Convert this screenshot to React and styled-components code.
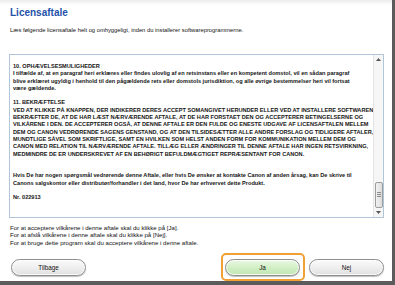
import React from "react";
import styled, { createGlobalStyle } from "styled-components";

const Global = createGlobalStyle`
  html, body { margin: 0; padding: 0; background: #ffffff; }
  body { font-family: "Liberation Sans", Arial, sans-serif; }
  * { box-sizing: border-box; }
`;

const Window = styled.div`
  width: 395px;
  height: 285px;
  display: flex;
  flex-direction: column;
  background: linear-gradient(#ececec 0px, #ffffff 5px);
  border-right: 3px solid #5b5b5b;
  border-bottom: 4px solid #5b5b5b;
  padding: 7px 8px 0 9px;
  font-family: "Liberation Sans", Arial, sans-serif;
  color: #111;
`;

const Title = styled.h1`
  margin: 0 0 0 1px;
  font-size: 10px;
  line-height: 12px;
  font-weight: bold;
  color: #2452a8;
`;

const Subtitle = styled.p`
  margin: 8px 0 0 1px;
  font-size: 5.8px;
  line-height: 7px;
  color: #111;
`;

const TextBox = styled.div`
  margin-top: 20px;
  height: 164px;
  border: 1px solid #b3c5d8;
  display: flex;
  overflow: hidden;
`;

const Content = styled.div`
  flex: 1;
  padding: 8px 0 0 3px;
  font-size: 5.6px;
  line-height: 7.3px;
  font-weight: bold;
  color: #151515;
  white-space: nowrap;
`;

const Para = styled.div`
  margin-bottom: ${(p) => p.$gap || 7.3}px;
`;

const Line = styled.div``;

const Scrollbar = styled.div`
  width: 10px;
  background: #f6f6f6;
  border-left: 1px solid #e4e4e4;
  display: flex;
  flex-direction: column;
  align-items: center;
`;

const Arrow = styled.div`
  width: 9px;
  height: 9px;
  display: flex;
  align-items: center;
  justify-content: center;
`;

const Track = styled.div`
  flex: 1;
  width: 100%;
  display: flex;
  flex-direction: column;
  justify-content: flex-end;
  align-items: center;
`;

const Thumb = styled.div`
  width: 8px;
  height: 26px;
  border: 1px solid #9c9c9c;
  border-radius: 2px;
  background: linear-gradient(90deg, #f2f2f2, #dcdcdc);
  display: flex;
  flex-direction: column;
  align-items: center;
  justify-content: center;
  gap: 1px;
  margin-bottom: 0px;
`;

const Grip = styled.div`
  width: 4px;
  height: 1px;
  background: #8a8a8a;
`;

const Instructions = styled.div`
  margin: 6px 0 0 1px;
  font-size: 6.1px;
  line-height: 7.5px;
  color: #111;
`;

const ButtonBar = styled.div`
  margin-top: 7px;
  display: flex;
  align-items: center;
  justify-content: space-between;
  padding: 0 0 0 2px;
`;

const RightGroup = styled.div`
  display: flex;
  align-items: center;
  gap: 4px;
`;

const FocusRing = styled.div`
  border: 2px solid #f0a035;
  border-radius: 5px;
  padding: 1px 3px 3px 2px;
`;

const Button = styled.button`
  width: 75px;
  height: 17px;
  border-radius: 9px;
  border: 1px solid #8e8e8e;
  background: ${(p) =>
    p.$primary
      ? "linear-gradient(#eaf8e4, #cdeec0 60%, #c4e6b6)"
      : "linear-gradient(#fbfbfb, #ececec 60%, #e0e0e0)"};
  box-shadow: inset 0 0 0 1px rgba(255, 255, 255, 0.8), 0 1px 1px rgba(0, 0, 0, 0.25);
  font-family: "Liberation Sans", Arial, sans-serif;
  font-size: 6.3px;
  color: #111;
  padding: 0;
`;

const UpIcon = () => (
  <svg width="5" height="3" viewBox="0 0 5 3">
    <path d="M0 3 L2.5 0 L5 3 Z" fill="#555" />
  </svg>
);
const DownIcon = () => (
  <svg width="5" height="3" viewBox="0 0 5 3">
    <path d="M0 0 L2.5 3 L5 0 Z" fill="#555" />
  </svg>
);

export default function App() {
  return (
    <>
      <Global />
      <Window>
        <Title>Licensaftale</Title>
        <Subtitle>
          Læs følgende licensaftale helt og omhyggeligt, inden du installerer softwareprogrammerne.
        </Subtitle>
        <TextBox>
          <Content>
            <Para>
              <Line>10. OPHÆVELSESMULIGHEDER</Line>
              <Line>
                I tilfælde af, at en paragraf heri erklæres eller findes ulovlig af en retsinstans eller en kompetent domstol, vil en sådan paragraf
              </Line>
              <Line>
                blive erklæret ugyldig i henhold til den pågældende rets eller domstols jurisdiktion, og alle øvrige bestemmelser heri vil fortsat
              </Line>
              <Line>være gældende.</Line>
            </Para>
            <Para $gap={14.6}>
              <Line>11. BEKRÆFTELSE</Line>
              <Line>VED AT KLIKKE PÅ KNAPPEN, DER INDIKERER DERES ACCEPT SOMANGIVET HERUNDER ELLER VED AT INSTALLERE SOFTWAREN</Line>
              <Line>BEKRÆFTER DE, AT DE HAR LÆST NÆRVÆRENDE AFTALE, AT DE HAR FORSTAET DEN OG ACCEPTERER BETINGELSERNE OG</Line>
              <Line>VILKÅRENE I DEN.  DE ACCEPTERER OGSÅ, AT DENNE AFTALE ER DEN FULDE OG ENESTE UDGAVE AF LICENSAFTALEN MELLEM</Line>
              <Line>DEM OG CANON VEDRØRENDE SAGENS GENSTAND, OG AT DEN TILSIDESÆTTER ALLE ANDRE FORSLAG OG TIDLIGERE AFTALER,</Line>
              <Line>MUNDTLIGE SÅVEL SOM SKRIFTLIGE, SAMT EN HVILKEN SOM HELST ANDEN FORM FOR KOMMUNIKATION MELLEM DEM OG</Line>
              <Line>CANON MED RELATION TIL NÆRVÆRENDE AFTALE.  TILLÆG ELLER ÆNDRINGER TIL DENNE AFTALE HAR INGEN RETSVIRKNING,</Line>
              <Line>MEDMINDRE DE ER UNDERSKREVET AF EN BEHØRIGT BEFULDMÆGTIGET REPRÆSENTANT FOR CANON.</Line>
            </Para>
            <Para>
              <Line>
                Hvis De har nogen spørgsmål vedrørende denne Aftale, eller hvis De ønsker at kontakte Canon af anden årsag, kan De skrive til
              </Line>
              <Line>
                Canons salgskontor eller distributør/forhandler i det land, hvor De har erhvervet dette Produkt.
              </Line>
            </Para>
            <Para>
              <Line>Nr. 022913</Line>
            </Para>
          </Content>
          <Scrollbar>
            <Arrow>
              <UpIcon />
            </Arrow>
            <Track>
              <Thumb>
                <Grip />
                <Grip />
                <Grip />
              </Thumb>
            </Track>
            <Arrow>
              <DownIcon />
            </Arrow>
          </Scrollbar>
        </TextBox>
        <Instructions>
          <div>For at acceptere vilkårene i denne aftale skal du klikke på [Ja].</div>
          <div>For at afslå vilkårene i denne aftale skal du klikke på [Nej].</div>
          <div>For at bruge dette program skal du acceptere vilkårene i denne aftale.</div>
        </Instructions>
        <ButtonBar>
          <Button>Tilbage</Button>
          <RightGroup>
            <FocusRing>
              <Button $primary>Ja</Button>
            </FocusRing>
            <Button>Nej</Button>
          </RightGroup>
        </ButtonBar>
      </Window>
    </>
  );
}
